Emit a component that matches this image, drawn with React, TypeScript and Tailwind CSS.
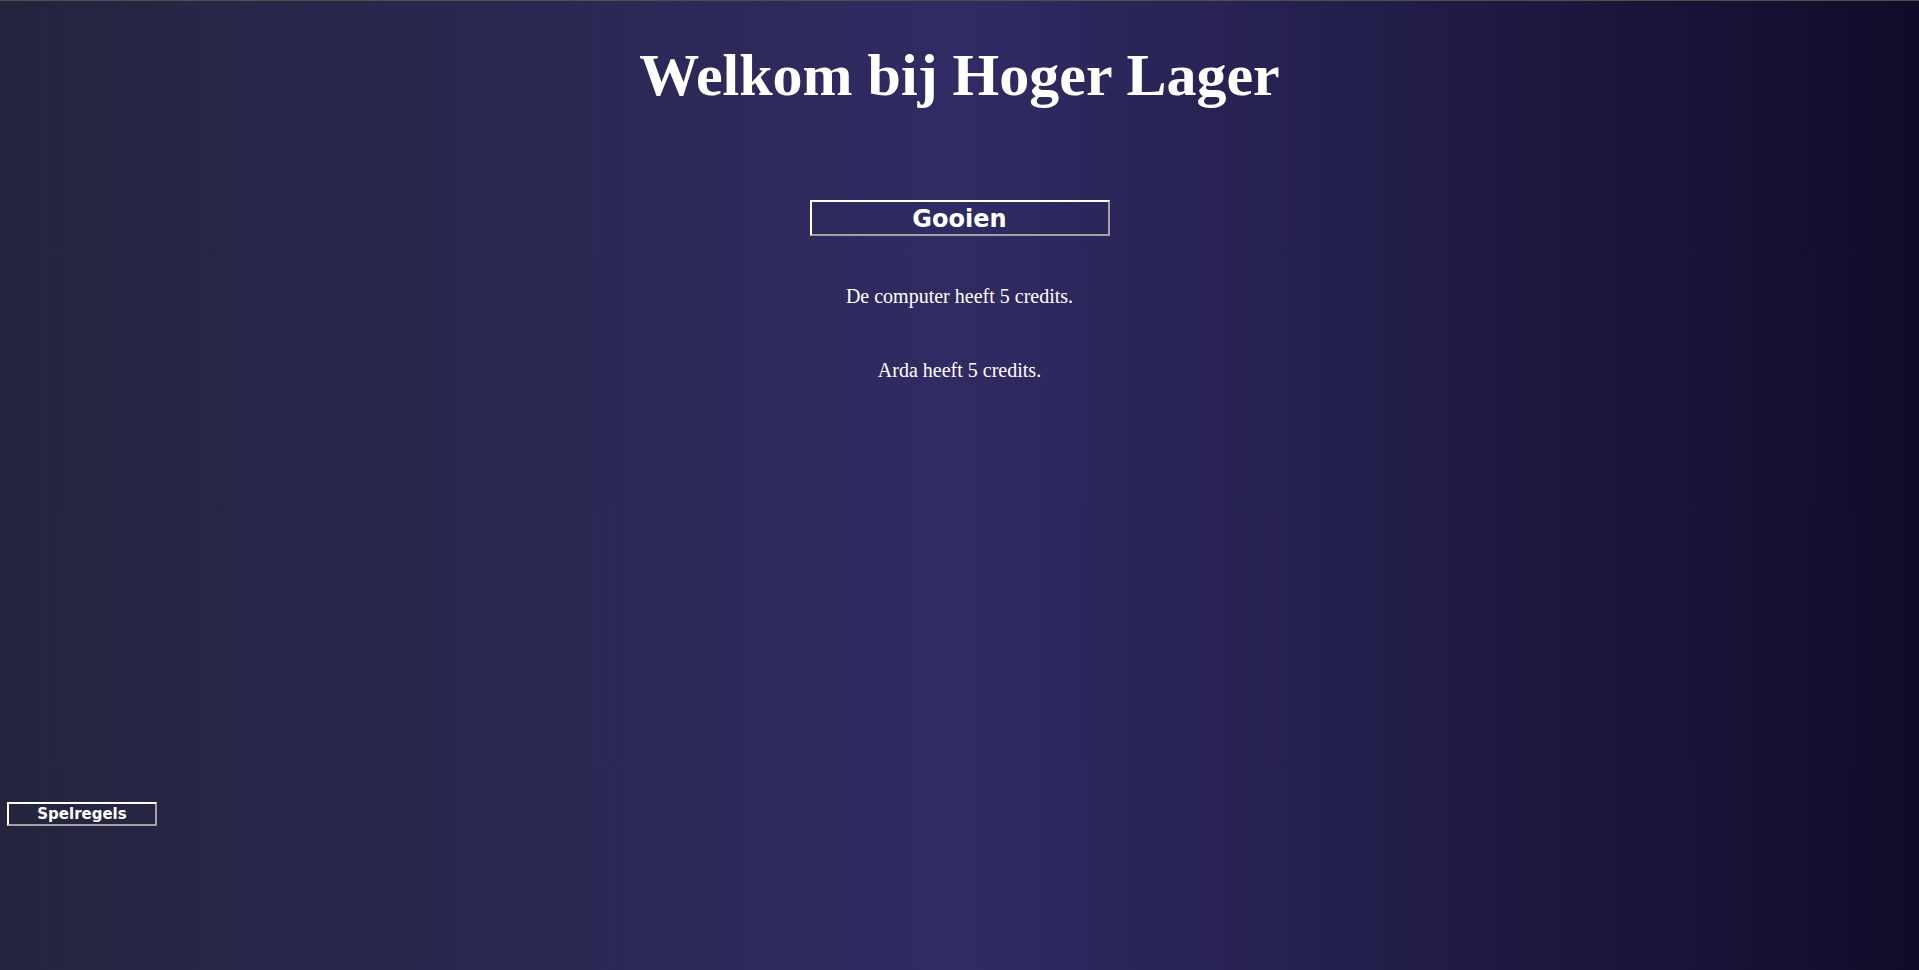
import React from 'react';

/**
 * Hoger Lager startscherm
 */
export default function App() {
  const computerCredits = 5;
  const spelerNaam = 'Arda';
  const spelerCredits = 5;

  return (
    <div className="min-h-screen flex flex-col text-white bg-[linear-gradient(to_right,#24243e,#302b63,#0f0c29)] font-['Liberation_Serif','Times_New_Roman',serif]">
      {/* bovenrand */}
      <div className="h-px bg-[#4f4f4f]" />

      <h1 className="mt-[40px] text-center text-[60px] leading-[69px] font-bold">
        Welkom bij Hoger Lager
      </h1>

      <div className="mt-[90px] flex justify-center">
        <button
          type="button"
          className="w-[300px] h-[36px] pt-[2px] flex items-center justify-center border-2 border-solid border-t-white border-l-white border-b-[#a3a3a3] border-r-[#a3a3a3] bg-transparent text-white text-[24px] font-bold font-['DejaVu_Sans',Verdana,sans-serif]"
        >
          Gooien
        </button>
      </div>

      <p className="mt-[49px] text-center text-[20px] leading-[23px]">
        De computer heeft {computerCredits} credits.
      </p>
      <p className="mt-[51px] text-center text-[20px] leading-[23px]">
        {spelerNaam} heeft {spelerCredits} credits.
      </p>

      <div className="mt-[420px] pl-[7px]">
        <button
          type="button"
          className="w-[150px] h-[24px] pt-px flex items-center justify-center border-2 border-solid border-t-white border-l-white border-b-[#a3a3a3] border-r-[#a3a3a3] bg-transparent text-white text-[15px] font-bold font-['DejaVu_Sans',Verdana,sans-serif]"
        >
          Spelregels
        </button>
      </div>
    </div>
  );
}
